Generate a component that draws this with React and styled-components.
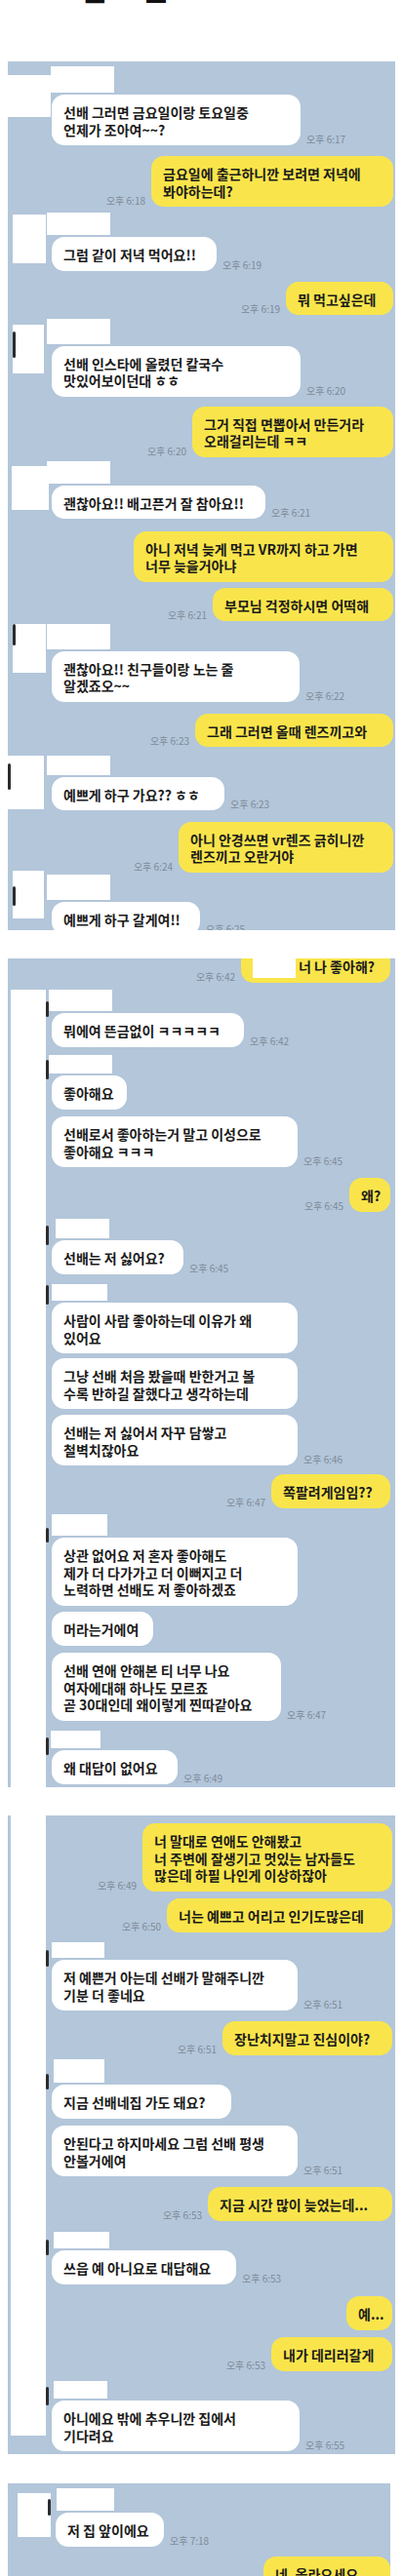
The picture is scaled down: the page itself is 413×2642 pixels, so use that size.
import React from 'react';
import styled, { createGlobalStyle } from 'styled-components';

const GlobalStyle = createGlobalStyle`
  html, body { margin: 0; padding: 0; background: #ffffff; }
  body { font-family: "Noto Sans CJK KR", "Noto Sans", sans-serif; }
  #root { width: 413px; }
`;

const Page = styled.div`
  width: 413px;
  height: 2642px;
  overflow: hidden;
  background: #ffffff;
  display: flex;
  flex-direction: column;
`;

const TitleClip = styled.div`
  height: 63px;
  flex: 0 0 63px;
  overflow: hidden;
`;

const Title = styled.h1`
  margin: -29px 0 0 82px;
  font-size: 30px;
  line-height: 33px;
  font-weight: 700;
  color: #111;
  letter-spacing: 14px;
  white-space: nowrap;
`;

const Panel = styled.section`
  flex: 0 0 ${p => p.$h}px;
  height: ${p => p.$h}px;
  width: ${p => p.$w}px;
  margin: ${p => p.$mt}px 0 0 8px;
  background: #b3c6da;
  overflow: hidden;
  display: flex;
`;

const Strip = styled.div`
  flex: 0 0 36px;
  margin: ${p => p.$top}px 0 ${p => p.$bottom}px 3px;
  background: #ffffff;
`;

const Body = styled.div`
  flex: 1;
  min-width: 0;
  display: flex;
  flex-direction: column;
`;

const InRow = styled.div`
  display: flex;
  align-items: flex-start;
  margin-top: ${p => p.$mt}px;
  flex-shrink: 0;
`;

const Gutter = styled.div`
  flex: 0 0 ${p => p.$w}px;
  display: flex;
  flex-direction: column;
  align-items: flex-start;
`;

const Avatar = styled.div`
  display: flex;
  justify-content: ${p => (p.$right ? 'flex-end' : 'flex-start')};
  align-items: flex-start;
  margin: ${p => p.$top}px 0 0 ${p => p.$left}px;
  width: ${p => p.$w}px;
  height: ${p => p.$h}px;
  background: #ffffff;
  flex-shrink: 0;
`;

const Mark = styled.div`
  width: 3px;
  height: ${p => p.$h}px;
  margin-top: ${p => p.$top}px;
  background: #2c2c2c;
  border-radius: 2px;
  flex-shrink: 0;
`;

const Stack = styled.div`
  display: flex;
  flex-direction: column;
  align-items: flex-start;
  min-width: 0;
`;

const NameBox = styled.div`
  width: ${p => p.$w}px;
  height: ${p => p.$h}px;
  margin: 0 0 2px ${p => p.$x}px;
  background: #ffffff;
`;

const Line = styled.div`
  display: flex;
  align-items: flex-end;
  gap: 6px;
`;

const OutRow = styled.div`
  display: flex;
  justify-content: flex-end;
  align-items: flex-end;
  gap: 6px;
  margin-top: ${p => p.$mt}px;
  padding-right: ${p => p.$pr}px;
  flex-shrink: 0;
`;

const Bubble = styled.div`
  box-sizing: border-box;
  min-width: ${p => p.$w}px;
  flex: 0 0 auto;
  padding: 10px 8px 7px 12px;
  background: ${p => (p.$me ? '#f9e54b' : '#ffffff')};
  border-radius: 13px;
  font-size: 14px;
  line-height: 17.5px;
  font-weight: 600;
  color: #1b1b1b;
  white-space: nowrap;
`;

const Redact = styled.span`
  display: inline-block;
  width: ${p => p.$w}px;
  height: 20px;
  margin: 0 3px -2.5px 0;
  vertical-align: bottom;
  background: #ffffff;
`;

const Time = styled.span`
  font-size: 10px;
  line-height: 12px;
  color: #7e8a98;
  white-space: nowrap;
  flex-shrink: 0;
`;

const P1 = [
  { t: 'in', mt: 5, name: { h: 27, x: -1 }, av: { top: 9, left: 0, w: 44, h: 43 }, w: 255, lines: ['선배 그러면 금요일이랑 토요일중', '언제가 조아여~~?'], ts: '오후 6:17' },
  { t: 'out', mt: 11, w: 248, lines: ['금요일에 출근하니깐 보려면 저녁에', '봐야하는데?'], ts: '오후 6:18' },
  { t: 'in', mt: 6, name: { h: 23 }, av: { top: 2, left: 5, w: 34, h: 50 }, w: 169, lines: ['그럼 같이 저녁 먹어요!!'], ts: '오후 6:19' },
  { t: 'out', mt: 11, w: 110, lines: ['뭐 먹고싶은데'], ts: '오후 6:19' },
  { t: 'in', mt: 3.5, name: { h: 26 }, av: { top: 6, left: 5, w: 32, h: 50, mark: { top: 7, h: 27 } }, w: 255, lines: ['선배 인스타에 올렸던 칼국수', '맛있어보이던대 ㅎㅎ'], ts: '오후 6:20' },
  { t: 'out', mt: 10, w: 206, lines: ['그거 직접 면뽑아서 만든거라', '오래걸리는데 ㅋㅋ'], ts: '오후 6:20' },
  { t: 'in', mt: 4, name: { h: 23 }, av: { top: 5, left: 4, w: 38, h: 45 }, w: 219, lines: ['괜찮아요!! 배고픈거 잘 참아요!!'], ts: '오후 6:21' },
  { t: 'out', mt: 12.5, w: 266, lines: ['아니 저녁 늦게 먹고 VR까지 하고 가면', '너무 늦을거아냐'] },
  { t: 'out', mt: 6, w: 185, lines: ['부모님 걱정하시면 어떡해'], ts: '오후 6:21' },
  { t: 'in', mt: 2.5, name: { h: 26 }, av: { top: 0, left: 5, w: 34, h: 50, mark: { top: 0, h: 22 } }, w: 254, lines: ['괜찮아요!! 친구들이랑 노는 줄', '알겠죠오~~'], ts: '오후 6:22' },
  { t: 'out', mt: 12, w: 203, lines: ['그래 그러면 올때 렌즈끼고와'], ts: '오후 6:23' },
  { t: 'in', mt: 8.5, name: { h: 20 }, av: { top: 0, left: 0, w: 37, h: 55, mark: { top: 8, h: 27 } }, w: 177, lines: ['예쁘게 하구 가요?? ㅎㅎ'], ts: '오후 6:23' },
  { t: 'out', mt: 11.5, w: 220, lines: ['아니 안경쓰면 vr렌즈 긁히니깐', '렌즈끼고 오란거야'], ts: '오후 6:24' },
  { t: 'in', mt: 2, name: { h: 26 }, av: { top: -4, left: 5, w: 32, h: 49, mark: { top: 16, h: 20 } }, w: 152, lines: ['예쁘게 하구 갈게여!!'], ts: '오후 6:25' },
];

const P2 = [
  { t: 'out', mt: -10, w: 153, redact: 44, lines: ['너 나 좋아해?'], ts: '오후 6:42' },
  { t: 'in', mt: 7.5, name: { h: 22, x: -3 }, mark: { top: 12, h: 16 }, w: 197, lines: ['뭐에여 뜬금없이 ㅋㅋㅋㅋㅋ'], ts: '오후 6:42' },
  { t: 'in', mt: 8.5, name: { h: 19, x: -3 }, mark: { top: 5, h: 20 }, w: 77, lines: ['좋아해요'] },
  { t: 'in', mt: 7.5, w: 252, lines: ['선배로서 좋아하는거 말고 이성으로', '좋아해요 ㅋㅋㅋ'], ts: '오후 6:45' },
  { t: 'out', mt: 11, w: 42, lines: ['왜?'], ts: '오후 6:45' },
  { t: 'in', mt: 7.5, name: { h: 20, x: 4, w: 55 }, mark: { top: 7, h: 20 }, w: 135, lines: ['선배는 저 싫어요?'], ts: '오후 6:45' },
  { t: 'in', mt: 10.5, name: { h: 17, x: 0, w: 57 }, mark: { top: 1, h: 20 }, w: 252, lines: ['사람이 사람 좋아하는데 이유가 왜', '있어요'] },
  { t: 'in', mt: 5, w: 252, lines: ['그냥 선배 처음 봤을때 반한거고 볼', '수록 반하길 잘했다고 생각하는데'] },
  { t: 'in', mt: 6, w: 252, lines: ['선배는 저 싫어서 자꾸 담쌓고', '철벽치잖아요'], ts: '오후 6:46' },
  { t: 'out', mt: 9, w: 122, lines: ['쪽팔려게임임??'], ts: '오후 6:47' },
  { t: 'in', mt: 6.5, name: { h: 22, x: 0, w: 57 }, mark: { top: 14, h: 15 }, w: 252, lines: ['상관 없어요 저 혼자 좋아해도', '제가 더 다가가고 더 이뻐지고 더', '노력하면 선배도 저 좋아하겠죠'] },
  { t: 'in', mt: 6.5, w: 104, lines: ['머라는거에여'] },
  { t: 'in', mt: 7.5, w: 235, lines: ['선배 연애 안해본 티 너무 나요', '여자에대해 하나도 모르죠', '곧 30대인데 왜이렇게 찐따같아요'], ts: '오후 6:47' },
  { t: 'in', mt: 10.5, name: { h: 18, x: -1, w: 51 }, mark: { top: 7, h: 18 }, w: 129, lines: ['왜 대답이 없어요'], ts: '오후 6:49' },
];

const P3 = [
  { t: 'out', mt: 8, w: 256, lines: ['너 말대로 연애도 안해봤고', '너 주변에 잘생기고 멋있는 남자들도', '많은데 하필 나인게 이상하잖아'], ts: '오후 6:49' },
  { t: 'out', mt: 7.5, w: 231, lines: ['너는 예쁘고 어리고 인기도많은데'], ts: '오후 6:50' },
  { t: 'in', mt: 10.5, name: { h: 16, x: 0, w: 54 }, mark: { top: 8, h: 17 }, w: 252, lines: ['저 예쁜거 아는데 선배가 말해주니깐', '기분 더 좋네요'], ts: '오후 6:51' },
  { t: 'out', mt: 11, w: 174, lines: ['장난치지말고 진심이야?'], ts: '오후 6:51' },
  { t: 'in', mt: 4.5, name: { h: 24, x: 2, w: 52 }, mark: { top: 15, h: 16 }, w: 184, lines: ['지금 선배네집 가도 돼요?'] },
  { t: 'in', mt: 7.5, w: 252, lines: ['안된다고 하지마세요 그럼 선배 평생', '안볼거에여'], ts: '오후 6:51' },
  { t: 'out', mt: 11, w: 189, lines: ['지금 시간 많이 늦었는데...'], ts: '오후 6:53' },
  { t: 'in', mt: 11.5, name: { h: 17, x: 2, w: 57 }, mark: { top: 8, h: 16 }, w: 189, lines: ['쓰읍 예 아니요로 대답해요'], ts: '오후 6:53' },
  { t: 'out', mt: 12.5, w: 47, lines: ['예...'] },
  { t: 'out', mt: 7.5, w: 124, lines: ['내가 데리러갈게'], ts: '오후 6:53' },
  { t: 'in', mt: 10.5, name: { h: 18, x: 2, w: 55 }, mark: { top: 6, h: 19 }, w: 254, lines: ['아니에요 밖에 추우니깐 집에서', '기다려요'], ts: '오후 6:55' },
];

const P4 = [
  { t: 'in', mt: 5, name: { h: 23, x: 1, w: 59 }, av: { top: 5, left: 10, w: 34, h: 45, mark: { top: 6, h: 17, right: true } }, w: 111, lines: ['저 집 앞이에요'], ts: '오후 7:18' },
  { t: 'out', mt: 10.5, w: 130, lines: ['네. 올라오세요'] },
];

const Text = ({ lines }) =>
  lines.map((l, i) => (
    <React.Fragment key={i}>
      {i > 0 && <br />}
      {l}
    </React.Fragment>
  ));

function Incoming({ m, gutter }) {
  return (
    <InRow $mt={m.mt}>
      <Gutter $w={gutter}>
        {m.av && (
          <Avatar $top={m.av.top} $left={m.av.left} $w={m.av.w} $h={m.av.h} $right={m.av.mark && m.av.mark.right}>
            {m.av.mark && <Mark $top={m.av.mark.top} $h={m.av.mark.h} />}
          </Avatar>
        )}
        {m.mark && <Mark $top={m.mark.top} $h={m.mark.h} />}
      </Gutter>
      <Stack>
        {m.name && <NameBox $h={m.name.h} $x={m.name.x ?? -5} $w={m.name.w ?? 65} />}
        <Line>
          <Bubble $w={m.w}>
            <Text lines={m.lines} />
          </Bubble>
          {m.ts && <Time>{m.ts}</Time>}
        </Line>
      </Stack>
    </InRow>
  );
}

function Outgoing({ m, pr }) {
  return (
    <OutRow $mt={m.mt} $pr={pr}>
      {m.ts && <Time>{m.ts}</Time>}
      <Bubble $me $w={m.w}>
        {m.redact && <Redact $w={m.redact} />}
        <Text lines={m.lines} />
      </Bubble>
    </OutRow>
  );
}

function Chat({ items, gutter, pr }) {
  return items.map((m, i) =>
    m.t === 'in' ? <Incoming key={i} m={m} gutter={gutter} /> : <Outgoing key={i} m={m} pr={pr} />
  );
}

export default function App() {
  return (
    <Page>
      <GlobalStyle />
      <TitleClip>
        <Title>썸 썰</Title>
      </TitleClip>

      <Panel $mt={0} $w={397} $h={891}>
        <Body>
          <Chat items={P1} gutter={45} pr={2} />
        </Body>
      </Panel>

      <Panel $mt={29} $w={397} $h={850}>
        <Strip $top={32} $bottom={0} />
        <Body>
          <Chat items={P2} gutter={6} pr={5} />
        </Body>
      </Panel>

      <Panel $mt={29} $w={397} $h={655}>
        <Strip $top={0} $bottom={19} />
        <Body>
          <Chat items={P3} gutter={6} pr={3} />
        </Body>
      </Panel>

      <Panel $mt={30} $w={392} $h={95}>
        <Body>
          <Chat items={P4} gutter={49} pr={0} />
        </Body>
      </Panel>
    </Page>
  );
}
